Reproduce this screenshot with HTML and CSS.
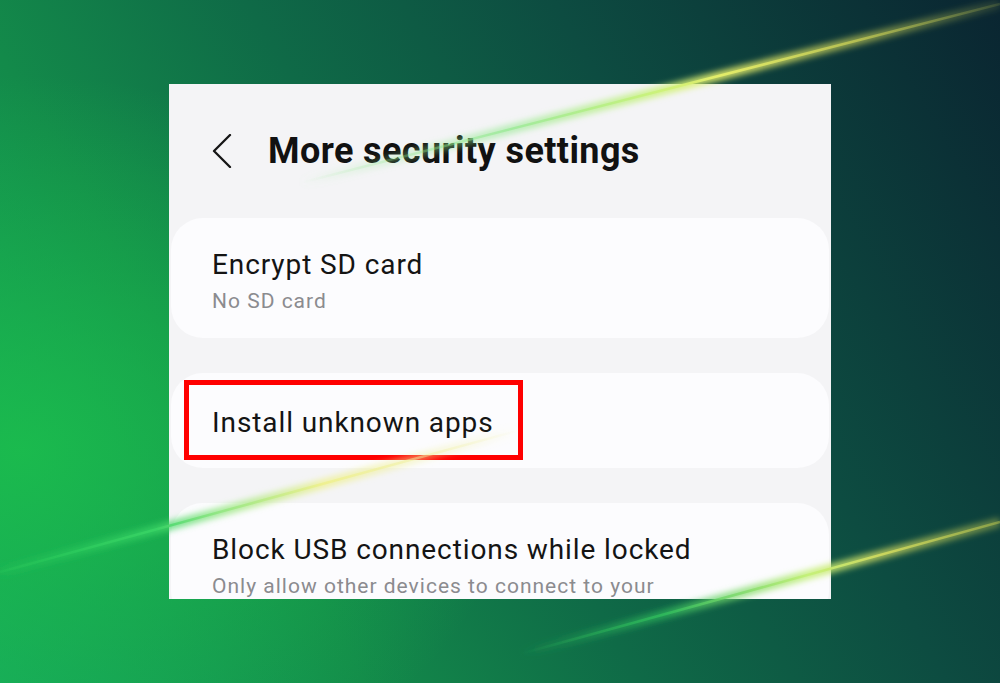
FILE: index.html
```html
<!DOCTYPE html>
<html lang="en">
<head>
    <meta charset="UTF-8">
    <meta name="viewport" content="width=device-width, initial-scale=1.0">
    <title>More security settings</title>
    <link rel="stylesheet" href="styles.css">
</head>
<body>
    <div class="scene">
        <div class="phone">
            <div class="topbar">
                <svg class="back" width="22" height="34" viewBox="0 0 22 34">
                    <path d="M19 1 L3 17 L19 33" fill="none" stroke="#151515" stroke-width="2.3" stroke-linecap="round" stroke-linejoin="round"/>
                </svg>
                <h1>More security settings</h1>
            </div>

            <div class="card">
                <div class="card-title">Encrypt SD card</div>
                <div class="card-sub">No SD card</div>
            </div>

            <div class="card card-single">
                <div class="card-title">Install unknown apps</div>
                <div class="callout"></div>
            </div>

            <div class="card">
                <div class="card-title">Block USB connections while locked</div>
                <div class="card-sub">Only allow other devices to connect to your</div>
            </div>
        </div>

        <!-- light streaks over the picture -->
        <svg class="streaks" width="1000" height="683" viewBox="0 0 1000 683">
            <defs>
                <filter id="glow" x="-10%" y="-50%" width="120%" height="200%">
                    <feGaussianBlur stdDeviation="3"/>
                </filter>
                <linearGradient id="s1" gradientUnits="userSpaceOnUse" x1="300" y1="183" x2="1000" y2="4">
                    <stop offset="0" stop-color="#8ee88a" stop-opacity="0"/>
                    <stop offset="0.3" stop-color="#8ee88a" stop-opacity="0.6"/>
                    <stop offset="0.5" stop-color="#c8f27a" stop-opacity="0.9"/>
                    <stop offset="0.6" stop-color="#e6ef6a" stop-opacity="0.95"/>
                    <stop offset="0.8" stop-color="#c9cf55" stop-opacity="0.7"/>
                    <stop offset="1" stop-color="#b8c050" stop-opacity="0.15"/>
                </linearGradient>
                <linearGradient id="s2" gradientUnits="userSpaceOnUse" x1="0" y1="572" x2="520" y2="430">
                    <stop offset="0" stop-color="#2ccf5c" stop-opacity="0.2"/>
                    <stop offset="0.3" stop-color="#3ad566" stop-opacity="0.8"/>
                    <stop offset="0.42" stop-color="#8fe680" stop-opacity="0.85"/>
                    <stop offset="0.62" stop-color="#eef08a" stop-opacity="0.8"/>
                    <stop offset="0.82" stop-color="#f0f0a0" stop-opacity="0.45"/>
                    <stop offset="1" stop-color="#f0f0a0" stop-opacity="0"/>
                </linearGradient>
                <linearGradient id="s3" gradientUnits="userSpaceOnUse" x1="520" y1="654" x2="1000" y2="522">
                    <stop offset="0" stop-color="#2fbf5a" stop-opacity="0"/>
                    <stop offset="0.3" stop-color="#32c25e" stop-opacity="0.7"/>
                    <stop offset="0.6" stop-color="#c4f078" stop-opacity="0.95"/>
                    <stop offset="0.75" stop-color="#d8e060" stop-opacity="0.8"/>
                    <stop offset="1" stop-color="#c8d050" stop-opacity="0.45"/>
                </linearGradient>
            </defs>
            <line x1="300" y1="183" x2="1000" y2="4" stroke="url(#s1)" stroke-width="9" filter="url(#glow)"/>
            <line x1="300" y1="183" x2="1000" y2="4" stroke="url(#s1)" stroke-width="2.5"/>
            <line x1="0" y1="572" x2="520" y2="430" stroke="url(#s2)" stroke-width="9" filter="url(#glow)"/>
            <line x1="0" y1="572" x2="520" y2="430" stroke="url(#s2)" stroke-width="2.5"/>
            <line x1="520" y1="654" x2="1000" y2="522" stroke="url(#s3)" stroke-width="9" filter="url(#glow)"/>
            <line x1="520" y1="654" x2="1000" y2="522" stroke="url(#s3)" stroke-width="2.5"/>
        </svg>
    </div>
</body>
</html>
```

FILE: styles.css
```css
html, body {
    margin: 0;
    padding: 0;
}
body {
    font-family: Roboto, "Liberation Sans", sans-serif;
    color: #141414;
}
.scene {
    position: relative;
    width: 1000px;
    height: 683px;
    overflow: hidden;
    display: flex;
    justify-content: center;
    align-items: flex-start;
    padding-top: 84px;
    box-sizing: border-box;
    background:
        radial-gradient(ellipse 50% 55% at 2% 66%, rgba(28, 194, 76, 0.8), rgba(28, 194, 76, 0) 100%),
        linear-gradient(60deg, #16a65c 0%, #138a4a 26%, #0f6a47 46%, #0d4c41 68%, #0a2531 100%);
}
.phone {
    width: 662px;
    height: 515px;
    background-color: #f4f4f6;
    overflow: hidden;
}
.topbar {
    height: 134px;
    display: flex;
    align-items: center;
    padding-left: 42px;
}
.back {
    flex: none;
}
.topbar h1 {
    margin: 0 0 0 35px;
    font-size: 36px;
    font-weight: 700;
    letter-spacing: 0.4px;
    color: #111;
}
.card {
    position: relative;
    margin: 0 2px 35px;
    background-color: #fcfcfe;
    border-radius: 32px;
    padding: 29px 41px 23px;
}
.card-single {
    padding: 32px 41px 27px;
}
.card-title {
    font-size: 28px;
    line-height: 36px;
    letter-spacing: 0.9px;
    color: #141414;
}
.card-sub {
    margin-top: 4px;
    font-size: 21px;
    line-height: 28px;
    letter-spacing: 1px;
    color: #8b8b8f;
}
.callout {
    position: absolute;
    left: 13px;
    top: 7px;
    width: 339px;
    height: 80px;
    border: 5px solid #ff0000;
    box-sizing: border-box;
}
.streaks {
    position: absolute;
    left: 0;
    top: 0;
    pointer-events: none;
}
```
